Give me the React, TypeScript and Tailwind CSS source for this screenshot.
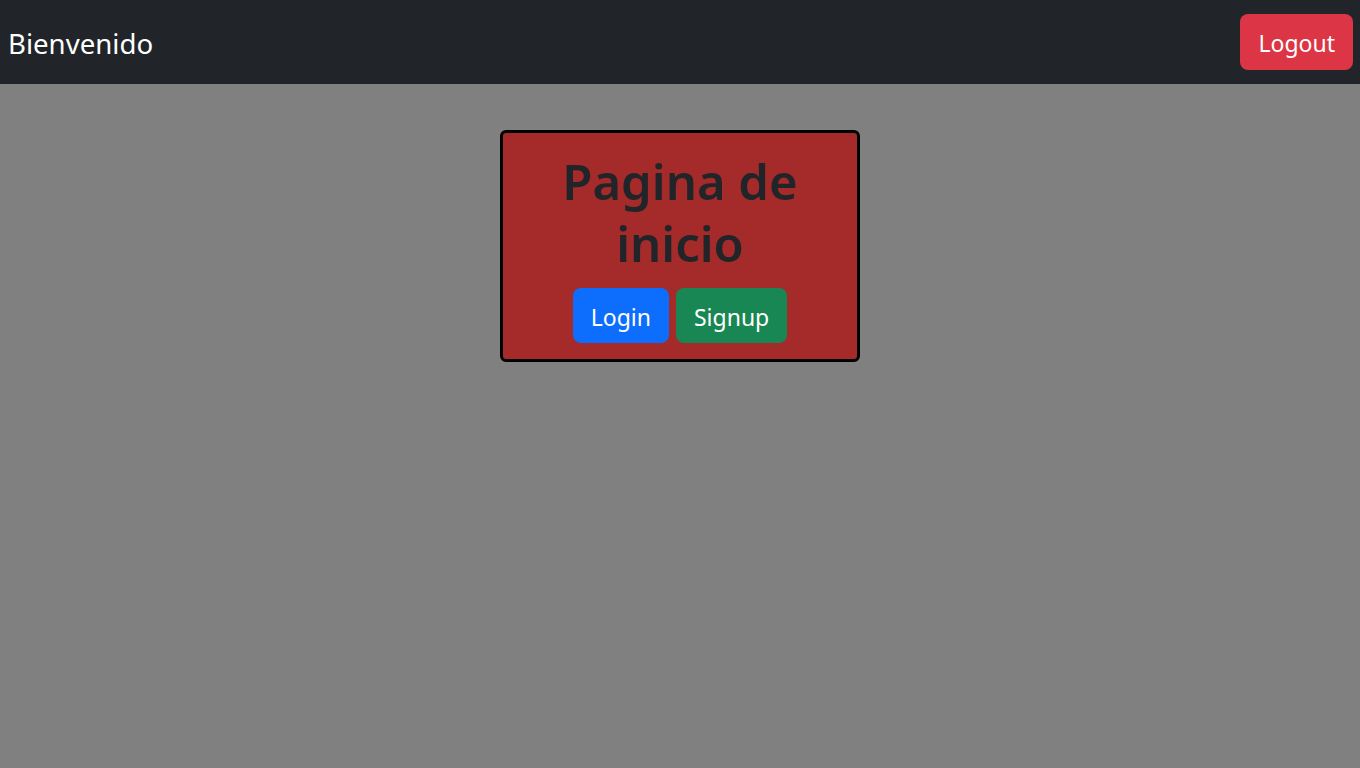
export default function App() {
  return (
    <div className="min-h-screen bg-[#808080] font-['Noto_Sans','Open_Sans',sans-serif]">
      <nav className="flex h-[84px] items-center justify-between bg-[#212529] pl-2 pr-[7px]">
        <span className="pt-[4px] text-[27.6px] text-white">Bienvenido</span>
        <button className="h-[56px] rounded-lg bg-[#dc3545] px-[18px] pt-[3px] text-[23px] text-white">
          Logout
        </button>
      </nav>
      <div className="flex justify-center pt-[46px]">
        <div className="w-[360px] rounded-md border-[3px] border-black bg-[#a52a2a] px-4 pb-4 pt-[17px] text-center">
          <h1 className="text-[49px] font-semibold leading-[62px] text-[#212529]">Pagina de inicio</h1>
          <div className="mt-[14px] flex justify-center gap-[7px]">
            <button className="h-[55px] rounded-lg bg-[#0d6efd] px-[18px] pt-[3px] text-[23px] text-white">Login</button>
            <button className="h-[55px] rounded-lg bg-[#198754] px-[18px] pt-[3px] text-[23px] text-white">Signup</button>
          </div>
        </div>
      </div>
    </div>
  )
}
